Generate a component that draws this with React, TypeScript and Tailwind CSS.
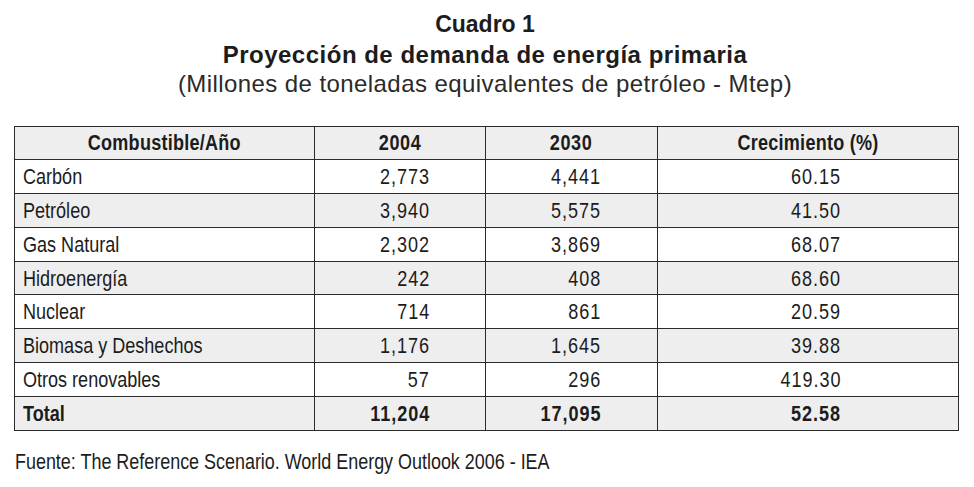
import React from "react";

const rows: [string, string, string, string][] = [
  ["Carbón", "2,773", "4,441", "60.15"],
  ["Petróleo", "3,940", "5,575", "41.50"],
  ["Gas Natural", "2,302", "3,869", "68.07"],
  ["Hidroenergía", "242", "408", "68.60"],
  ["Nuclear", "714", "861", "20.59"],
  ["Biomasa y Deshechos", "1,176", "1,645", "39.88"],
  ["Otros renovables", "57", "296", "419.30"],
];

const cell = "h-[33.8px] border-r border-b border-[#2b2b2b] flex items-center";

function NL({ children }: { children: React.ReactNode }) {
  return <span className="inline-block whitespace-nowrap scale-x-[0.82] origin-left">{children}</span>;
}
function NR({ children }: { children: React.ReactNode }) {
  return <span className="inline-block whitespace-nowrap scale-x-[0.82] origin-right tracking-[1.2px]">{children}</span>;
}
function NC({ children }: { children: React.ReactNode }) {
  return <span className="inline-block whitespace-nowrap scale-x-[0.82] origin-center">{children}</span>;
}

export default function App() {
  return (
    <div className="w-[974px] h-[487px] bg-white text-[#1c1c1c] font-['Liberation_Sans',Arial,sans-serif] overflow-hidden">
      <div className="pt-[10px] flex flex-col items-center pr-[4px]">
        <div className="text-[23px] leading-[29.5px] font-bold">Cuadro 1</div>
        <div className="text-[24px] leading-[29.5px] font-bold tracking-[0.5px]">
          Proyección de demanda de energía primaria
        </div>
        <div className="text-[24px] leading-[29.5px] tracking-[0.42px] text-[#2a2a2a]">
          (Millones de toneladas equivalentes de petróleo - Mtep)
        </div>
      </div>

      <div className="mt-[27px] ml-[14px] w-[945px] border-l border-t border-[#2b2b2b] grid grid-cols-[300px_171px_172px_301px] text-[22px]">
        <div className={`${cell} bg-[#eeeeee] justify-center font-bold tracking-[0.3px]`}><NC>Combustible/Año</NC></div>
        <div className={`${cell} bg-[#eeeeee] justify-center font-bold tracking-[0.8px]`}><NC>2004</NC></div>
        <div className={`${cell} bg-[#eeeeee] justify-center font-bold tracking-[0.8px]`}><NC>2030</NC></div>
        <div className={`${cell} bg-[#eeeeee] justify-center font-bold tracking-[0.3px]`}><NC>Crecimiento (%)</NC></div>

        {rows.map((r, i) => {
          const bg = i % 2 === 1 ? "bg-[#eeeeee]" : "bg-white";
          return (
            <React.Fragment key={r[0]}>
              <div className={`${cell} ${bg} pl-[8px]`}><NL>{r[0]}</NL></div>
              <div className={`${cell} ${bg} justify-end pr-[55px]`}><NR>{r[1]}</NR></div>
              <div className={`${cell} ${bg} justify-end pr-[56px]`}><NR>{r[2]}</NR></div>
              <div className={`${cell} ${bg} justify-end pr-[117px]`}><NR>{r[3]}</NR></div>
            </React.Fragment>
          );
        })}

        <div className={`${cell} bg-[#eeeeee] pl-[8px] font-bold`}><NL>Total</NL></div>
        <div className={`${cell} bg-[#eeeeee] justify-end pr-[55px] font-bold`}><NR>11,204</NR></div>
        <div className={`${cell} bg-[#eeeeee] justify-end pr-[56px] font-bold`}><NR>17,095</NR></div>
        <div className={`${cell} bg-[#eeeeee] justify-end pr-[117px] font-bold`}><NR>52.58</NR></div>
      </div>

      <div className="mt-[18px] ml-[15px] text-[22px] leading-[26px]">
        <span className="inline-block whitespace-nowrap scale-x-[0.815] origin-left">
          Fuente: The Reference Scenario. World Energy Outlook 2006 - IEA
        </span>
      </div>
    </div>
  );
}
